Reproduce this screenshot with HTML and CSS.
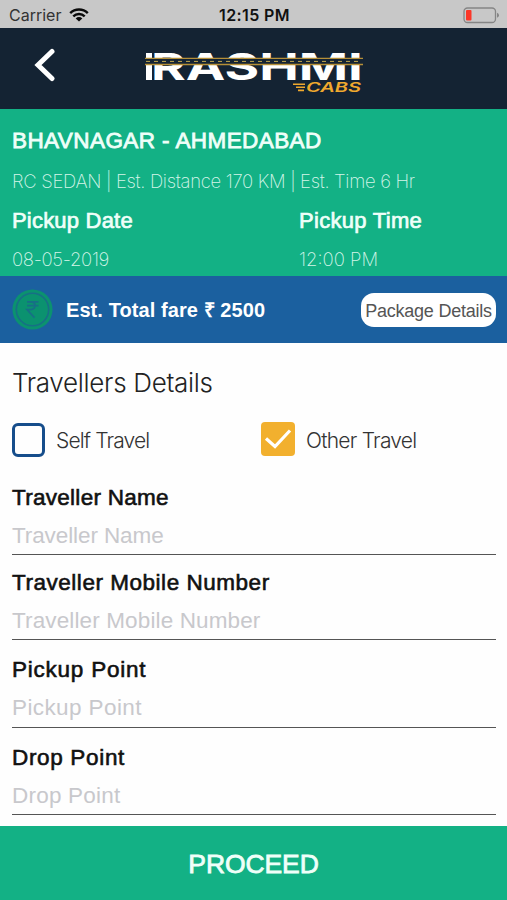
FILE: index.html
```html
<!DOCTYPE html>
<html lang="en">
<head>
<meta charset="utf-8">
<title>Rashmi Cabs</title>
<link rel="stylesheet" href="styles.css">
</head>
<body>
<div class="app">
  <div class="status">
    <div class="carrier"><span>Carrier</span>
      <svg class="wifi" width="20" height="14" viewBox="0 0 20 14" fill="none" stroke="#0a0a0a" stroke-width="2.4"><path d="M1.2 5.2a12.4 12.4 0 0 1 17.6 0M4.3 8.4a8 8 0 0 1 11.4 0"/><path d="M10 13.6 6.7 10.4a4.7 4.7 0 0 1 6.6 0Z" fill="#0a0a0a" stroke="none"/></svg>
    </div>
    <span class="clock">12:15 PM</span>
    <svg class="battery" width="37" height="17" viewBox="0 0 37 17"><rect x="1" y="1" width="31.5" height="14.5" rx="3.5" fill="none" stroke="#858585" stroke-width="1.3"/><rect x="3" y="3" width="5.5" height="10.5" rx="1" fill="#fb3728"/><path d="M34 5.8q2 .6 2 2.4t-2 2.5z" fill="#858585"/></svg>
  </div>
  <header class="topbar">
    <svg class="back" width="24" height="36" viewBox="0 0 24 36" fill="none" stroke="#fff" stroke-width="5" stroke-linecap="round" stroke-linejoin="miter"><path d="M20 3.5 6 17 20 30.5"/></svg>
    <svg class="logo" width="240" height="72" viewBox="-10 -14 240 72">
      <rect x="1" y="3" width="6" height="27" fill="#fff"/>
      <text class="brand" x="6" y="30" textLength="212" lengthAdjust="spacingAndGlyphs">RASHMI</text>
      <rect x="0" y="8" width="218" height="7" fill="#142333"/>
      <path d="M0 8.3h218M0 14.5h218" stroke="#b58f38" stroke-width="1.3"/>
      <path d="M1 11.4h216" stroke="#c4a94e" stroke-width="1" stroke-dasharray="4 4"/>
      <path d="M148 34.2h12M151 37.3h9M153 40.4h6" stroke="#f0a92e" stroke-width="1.6"/>
      <text class="cabs" x="161" y="42" textLength="55" lengthAdjust="spacingAndGlyphs">CABS</text>
    </svg>
  </header>
  <section class="trip">
    <h1 class="route">BHAVNAGAR - AHMEDABAD</h1>
    <p class="meta">RC SEDAN | Est. Distance 170 KM | Est. Time 6 Hr</p>
    <div class="when">
      <div><h2 class="when-title date">Pickup Date</h2><p class="value day">08-05-2019</p></div>
      <div><h2 class="when-title">Pickup Time</h2><p class="value">12:00 PM</p></div>
    </div>
  </section>
  <section class="fare">
    <svg class="coin" width="41" height="41" viewBox="0 0 41 41"><circle cx="20.5" cy="20.5" r="20" fill="#0b926f"/><circle cx="20.5" cy="20.5" r="16.2" fill="none" stroke="#176f86" stroke-width="1.6"/><path d="M15 12.8h11.5M15 16.6h11.5M15 12.8h3.5q4.5 0 4.5 3.8t-4.5 4H15l7.5 8" fill="none" stroke="#176f86" stroke-width="1.7"/></svg>
    <strong class="total">Est. Total fare ₹ 2500</strong>
    <button class="package"><span>Package Details</span></button>
  </section>
  <main class="form">
    <h2 class="form-title">Travellers Details</h2>
    <div class="choices">
      <div class="choice"><span class="box"></span><span class="choice-text self">Self Travel</span></div>
      <div class="choice"><svg class="checked" width="34" height="34" viewBox="0 0 34 34"><rect width="34" height="34" rx="4" fill="#f2b02e"/><path d="m5 16.5 9 8L29 8.5" fill="none" stroke="#fff" stroke-width="3.2"/></svg><span class="choice-text">Other Travel</span></div>
    </div>
    <div class="field name"><span class="label">Traveller Name</span><span class="placeholder">Traveller Name</span></div>
    <div class="field mobile"><span class="label">Traveller Mobile Number</span><span class="placeholder">Traveller Mobile Number</span></div>
    <div class="field wide pickup"><span class="label">Pickup Point</span><span class="placeholder">Pickup Point</span></div>
    <div class="field wide drop"><span class="label">Drop Point</span><span class="placeholder">Drop Point</span></div>
  </main>
  <button class="proceed">PROCEED</button>
</div>
</body>
</html>
```
FILE: styles.css
```css
* { box-sizing: border-box; }
body, h1, h2, p { margin: 0; }
body { background: #fefefe; font-family: "Liberation Sans", sans-serif; }
button { border: 0; padding: 0; font-family: inherit; }
.app { display: flex; flex-direction: column; width: 507px; height: 900px; overflow: hidden; white-space: nowrap; }

.status { display: grid; grid-template-columns: 1fr auto 1fr; align-items: center; height: 28px; padding: 2px 7px 0 9px; background: #c8c8c8; font: 16px/20px Inter, sans-serif; color: #333; }
.carrier { display: flex; align-items: center; gap: 8px; }
.clock { color: #111; font-weight: 600; letter-spacing: .4px; }
.battery { justify-self: end; }

.topbar { display: flex; height: 81px; padding: 8px 0 0 32px; background: #142333; }
.back { margin-top: 12px; }
.logo { margin-left: 79px; }
.brand { font: 700 37px Inter, sans-serif; fill: #fff; }
.cabs { font: italic 600 13px Inter, sans-serif; fill: #f0a92e; }

.trip { height: 167px; padding: 18px 12px 0; background: #13b185; color: #effff9; }
.route { font-size: 22.5px; line-height: 28px; font-weight: 400; letter-spacing: .42px; -webkit-text-stroke: .8px; }
.meta, .value { font: 200 18.5px/24px Inter, sans-serif; color: #d5f5e9; }
.meta { margin-top: 14px; letter-spacing: -.32px; }
.when { display: grid; grid-template-columns: 287px 1fr; margin-top: 14px; }
.when-title { font-size: 22px; line-height: 28px; font-weight: 400; letter-spacing: .3px; -webkit-text-stroke: .7px; }
.date { letter-spacing: .2px; }
.value { margin-top: 12px; }
.day { letter-spacing: -.35px; }

.fare { display: flex; align-items: center; height: 67px; padding: 0 11px 0 12px; background: #1b609f; }
.total { margin-left: 13px; color: #fff; font-size: 20px; letter-spacing: .08px; }
.package { width: 135px; height: 34px; margin-left: auto; border-radius: 13px; background: #fff; color: #555; font-size: 18px; line-height: 20px; letter-spacing: -.25px; padding-top: 3px; }

.form { flex: 1; padding: 23px 11px 0 12px; }
.form-title { font: 300 26px/34px Inter, sans-serif; letter-spacing: -.3px; color: #222; }
.choices { display: grid; grid-template-columns: 249px 1fr; height: 34px; margin-top: 23px; }
.choice { display: flex; align-items: center; gap: 11px; }
.checked { margin-top: -2px; }
.box { width: 33px; height: 34px; border: 3px solid #164d8b; border-radius: 6px; }
.choice-text { padding-top: 2px; font: 300 21px/28px Inter, sans-serif; letter-spacing: -.75px; color: #333; }
.self { letter-spacing: -.85px; }
.field { display: flex; flex-direction: column; height: 85px; padding-top: 15px; border-bottom: 1.5px solid #555; font-size: 22.5px; line-height: 26px; }
.choices + .field { margin-top: 13px; }
.wide { height: 87.5px; padding-top: 17px; }
.label { color: #111; -webkit-text-stroke: .6px; letter-spacing: .28px; }
.placeholder { margin-top: 12px; color: #c8c8cc; letter-spacing: -.1px; }
.mobile .label { letter-spacing: .53px; }
.mobile .placeholder { letter-spacing: .13px; }
.pickup .label { letter-spacing: .77px; }
.pickup .placeholder { letter-spacing: .4px; }
.drop .label { letter-spacing: .67px; }
.drop .placeholder { letter-spacing: .22px; }

.proceed { height: 74px; padding-top: 2px; background: #13b185; color: #effff9; font-size: 26.5px; letter-spacing: -.1px; -webkit-text-stroke: .8px; }
```
